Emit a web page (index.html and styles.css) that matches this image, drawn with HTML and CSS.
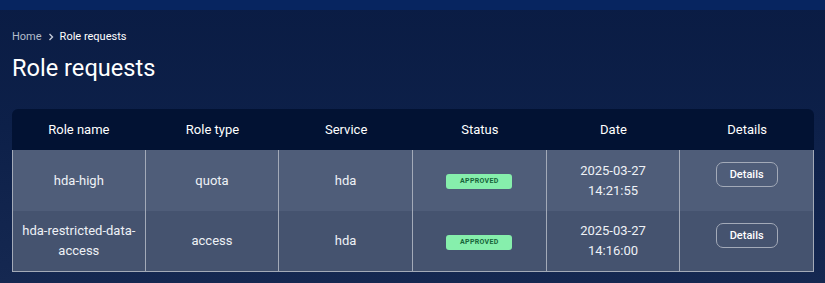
FILE: index.html
```html
<!DOCTYPE html>
<html lang="en">

<head>
    <meta charset="UTF-8">
    <meta name="viewport" content="width=device-width, initial-scale=1.0">
    <title>Role requests</title>
    <link rel="stylesheet" href="styles.css">
</head>

<body>
    <div class="topbar"></div>

    <main class="page">
        <nav class="crumbs">
            <a href="javascript:;" class="crumb-link">Home</a>
            <svg class="crumb-sep" viewBox="0 0 10 10" width="10" height="10">
                <path d="M3.5 2 L6.5 5 L3.5 8" fill="none" stroke="currentColor" stroke-width="1.4" />
            </svg>
            <span class="crumb-current">Role requests</span>
        </nav>

        <h1 class="title">Role requests</h1>

        <table class="requests">
            <thead>
                <tr>
                    <th>Role name</th>
                    <th>Role type</th>
                    <th>Service</th>
                    <th>Status</th>
                    <th>Date</th>
                    <th>Details</th>
                </tr>
            </thead>
            <tbody>
                <tr>
                    <td>hda-high</td>
                    <td>quota</td>
                    <td>hda</td>
                    <td><span class="badge">APPROVED</span></td>
                    <td>2025-03-27<br>14:21:55</td>
                    <td><button class="details-btn">Details</button></td>
                </tr>
                <tr>
                    <td>hda-restricted-data-access</td>
                    <td>access</td>
                    <td>hda</td>
                    <td><span class="badge">APPROVED</span></td>
                    <td>2025-03-27<br>14:16:00</td>
                    <td><button class="details-btn">Details</button></td>
                </tr>
            </tbody>
        </table>
    </main>
</body>

</html>
```

FILE: styles.css
```css
* {
    margin: 0;
    padding: 0;
    box-sizing: border-box;
}

body {
    height: 283px;
    font-family: Roboto, "Liberation Sans", sans-serif;
    color: #fff;
    background: linear-gradient(180deg, #0a1c44 0%, #0d2049 45%, #152851 100%);
    overflow: hidden;
}

.topbar {
    height: 10px;
    background-color: #072560;
}

.page {
    padding: 19px 12px 0;
}

/* breadcrumb */
.crumbs {
    display: flex;
    align-items: center;
    gap: 4px;
    font-size: 11px;
    line-height: 16px;
}

.crumb-link {
    color: #b3bccb;
    text-decoration: none;
}

.crumb-sep {
    color: #c4cbd8;
}

.crumb-current {
    color: #fff;
}

.title {
    margin-top: 9px;
    font-size: 23.6px;
    font-weight: 400;
    line-height: 28px;
}

/* table */
.requests {
    margin-top: 27px;
    width: 802px;
    border-collapse: separate;
    border-spacing: 0;
    table-layout: fixed;
    font-size: 13px;
    text-align: center;
}

.requests th {
    height: 41px;
    font-weight: 400;
    background-color: #021233;
}

.requests th:first-child {
    border-top-left-radius: 6px;
}

.requests th:last-child {
    border-top-right-radius: 6px;
}

.requests td {
    padding: 0 6px;
    line-height: 20px;
    color: #eef1f6;
    border-right: 1px solid #a3aab8;
    border-bottom: 1px solid #a3aab8;
}

.requests td:first-child {
    border-left: 1px solid #a3aab8;
}

.requests tbody tr:first-child td {
    height: 61px;
    background-color: #4f5d79;
    border-bottom: none;
}

.requests tbody tr:last-child td {
    height: 61px;
    background-color: #45536f;
}

.badge {
    display: inline-block;
    width: 66px;
    height: 15px;
    line-height: 15px;
    margin-top: 1px;
    font-size: 7px;
    font-weight: 700;
    letter-spacing: 0.3px;
    color: #16653a;
    background-color: #86efac;
    border-radius: 3px;
    vertical-align: middle;
}

.details-btn {
    width: 62px;
    height: 25px;
    margin-bottom: 12px;
    font-family: inherit;
    font-size: 11px;
    font-weight: 500;
    color: #fff;
    background: transparent;
    border: 1px solid #a3aab8;
    border-radius: 7px;
    cursor: pointer;
}
```
